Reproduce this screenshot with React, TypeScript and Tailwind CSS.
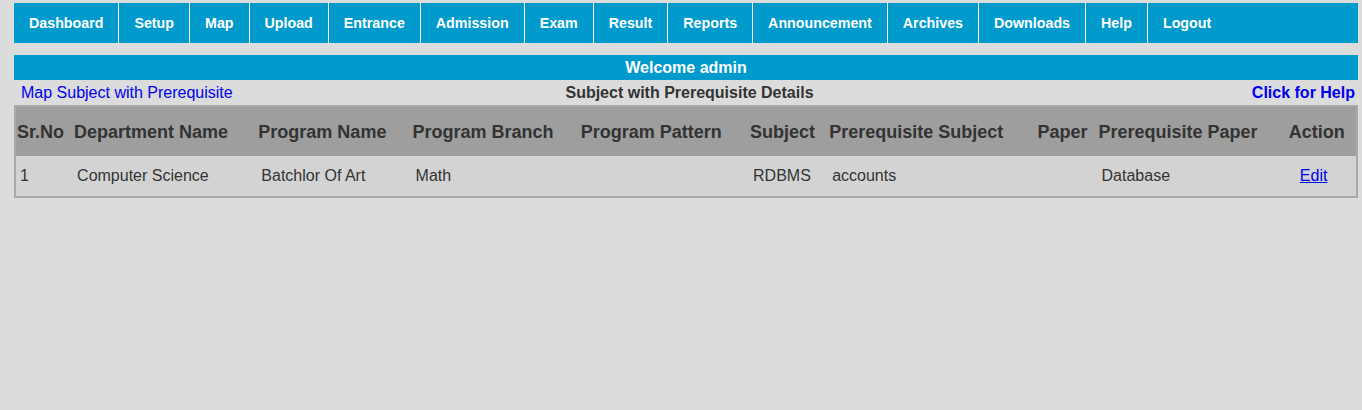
const navItems = [
  'Dashboard',
  'Setup',
  'Map',
  'Upload',
  'Entrance',
  'Admission',
  'Exam',
  'Result',
  'Reports',
  'Announcement',
  'Archives',
  'Downloads',
  'Help',
  'Logout',
];

// column widths measured from the header text positions
const columns = [
  { label: 'Sr.No', width: 58 },
  { label: 'Department Name', width: 184 },
  { label: 'Program Name', width: 154 },
  { label: 'Program Branch', width: 168 },
  { label: 'Program Pattern', width: 169 },
  { label: 'Subject', width: 79 },
  { label: 'Prerequisite Subject', width: 208 },
  { label: 'Paper', width: 61 },
  { label: 'Prerequisite Paper', width: 190 },
  { label: 'Action', width: 69 },
];

const rows = [
  {
    srNo: '1',
    department: 'Computer Science',
    program: 'Batchlor Of Art',
    branch: 'Math',
    pattern: '',
    subject: 'RDBMS',
    prereqSubject: 'accounts',
    paper: '',
    prereqPaper: 'Database',
  },
];

export default function App() {
  return (
    <div className="min-h-[410px] w-full bg-[#dcdcdc] pt-[3px] font-['Liberation_Sans',Arial,sans-serif]">
      <div className="ml-[14px] w-[1344px]">
        <nav className="flex h-10 bg-[#009acd]">
          {navItems.map((item, i) => (
            <a
              key={item}
              href="#"
              className={`flex items-center px-[15px] pt-[2px] text-[14.25px] font-bold text-white ${
                i > 0 ? 'border-l border-white' : ''
              }`}
            >
              {item}
            </a>
          ))}
        </nav>

        <div className="mt-3 flex h-[25px] items-center justify-center bg-[#009acd] text-base font-bold text-white">
          Welcome admin
        </div>

        <div className="flex h-[25px] items-center justify-between pl-[7px] pr-[3px] text-base">
          <a href="#" className="w-[300px] text-[#0000ee]">
            Map Subject with Prerequisite
          </a>
          <span className="pl-[3px] font-bold text-[#333]">Subject with Prerequisite Details</span>
          <a href="#" className="w-[300px] text-right font-bold text-[#0000ee]">
            Click for Help
          </a>
        </div>

        <table className="w-full table-fixed border-collapse border-2 border-[#a9a9a9] text-[#333]">
          <colgroup>
            {columns.map((c) => (
              <col key={c.label} style={{ width: c.width }} />
            ))}
          </colgroup>
          <thead>
            <tr className="h-[50px] bg-[#9e9e9e]">
              {columns.map((c) => (
                <th key={c.label} className="whitespace-nowrap pl-[1px] text-left text-lg font-bold">
                  {c.label}
                </th>
              ))}
            </tr>
          </thead>
          <tbody>
            {rows.map((r) => (
              <tr key={r.srNo} className="h-[41px] bg-[#d3d3d3] text-base">
                <td className="pl-1">{r.srNo}</td>
                <td className="pl-1">{r.department}</td>
                <td className="pl-1">{r.program}</td>
                <td className="pl-1">{r.branch}</td>
                <td className="pl-1">{r.pattern}</td>
                <td className="pl-1">{r.subject}</td>
                <td className="pl-1">{r.prereqSubject}</td>
                <td className="pl-1">{r.paper}</td>
                <td className="pl-1">{r.prereqPaper}</td>
                <td className="pl-3">
                  <a href="#" className="text-[#0000ee] underline">
                    Edit
                  </a>
                </td>
              </tr>
            ))}
          </tbody>
        </table>
      </div>
    </div>
  );
}
